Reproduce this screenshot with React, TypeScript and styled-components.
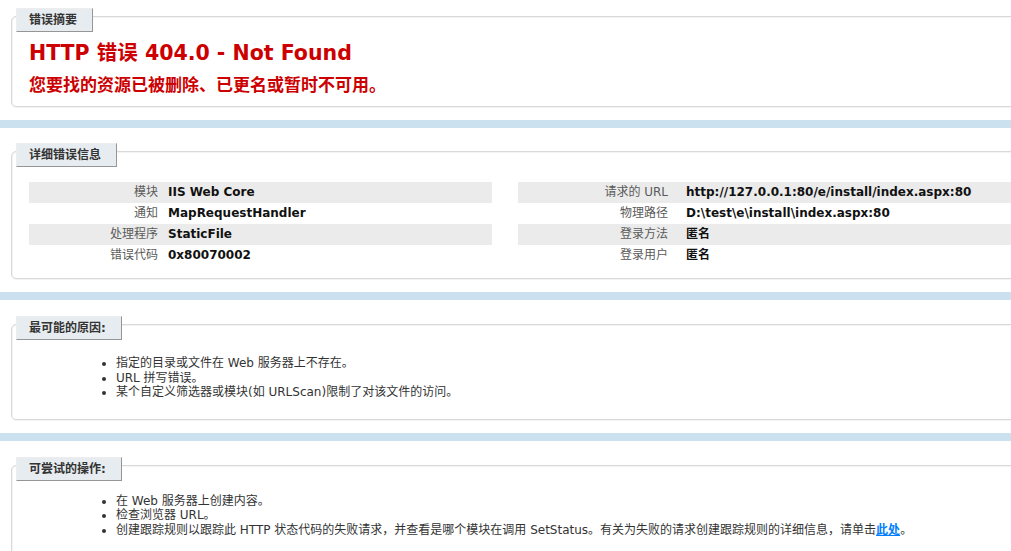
import React from "react";
import styled, { createGlobalStyle } from "styled-components";

const GlobalStyle = createGlobalStyle`
  html, body { margin: 0; padding: 0; }
  body {
    background: #cbe1ef;
    font-family: "DejaVu Sans", "Noto Sans CJK SC", sans-serif;
    font-size: 12px;
    color: #222;
    overflow: hidden;
  }
`;

const Page = styled.div`
  display: flex;
  flex-direction: column;
  gap: 8px;
  min-height: 551px;
`;

const Section = styled.section<{ $top: number; $grow?: boolean }>`
  background: #fff;
  display: flex;
  flex-direction: column;
  align-items: flex-start;
  padding: ${(p) => p.$top}px 0 13px 11px;
  flex-grow: ${(p) => (p.$grow ? 1 : 0)};
`;

const Tab = styled.div`
  position: relative;
  z-index: 1;
  margin: 0 0 -16px 5px;
  padding: 4px 15px 4px 12px;
  line-height: 14px;
  font-size: 12px;
  font-weight: bold;
  color: #333;
  background: #e7ecf0;
  border-top: 1px solid #ededed;
  border-left: 1px solid #ededed;
  border-right: 1px solid #969696;
  border-bottom: 1px solid #969696;
`;

const Box = styled.div<{ $pt: number; $pb: number }>`
  align-self: stretch;
  flex-grow: 1;
  margin-right: -60px;
  border: 1px solid #d9d9d9;
  box-shadow: inset 1px 1px 0 #f3f3f3, 0 1px 0 #f3f3f3;
  border-radius: 5px;
  padding: ${(p) => p.$pt + 1}px 0 ${(p) => p.$pb + 1}px 17px;
`;

const Title = styled.h2`
  margin: 0;
  font-size: 20.5px;
  line-height: 26px;
  color: #cc0000;
  font-weight: bold;
  white-space: nowrap;
`;

const Subtitle = styled.h3`
  margin: 7px 0 0;
  font-size: 17px;
  line-height: 24px;
  color: #cc0000;
  font-weight: bold;
  white-space: nowrap;
`;

const Details = styled.div`
  display: flex;
  gap: 26px;
`;

const InfoTable = styled.div<{ $width?: number }>`
  display: flex;
  flex-direction: column;
  ${(p) => (p.$width ? `width: ${p.$width}px; flex: none;` : `flex: 1;`)}
`;

const Row = styled.div<{ $alt: boolean; $label: number }>`
  display: grid;
  grid-template-columns: ${(p) => p.$label}px 1fr;
  background: ${(p) => (p.$alt ? "#ebebeb" : "transparent")};
  padding: 3px 0;
  line-height: 15px;
`;

const Label = styled.div<{ $pad: number }>`
  text-align: right;
  padding-right: ${(p) => p.$pad}px;
  color: #5a5a5a;
  white-space: nowrap;
`;

const Value = styled.div`
  font-weight: bold;
  color: #111;
  white-space: nowrap;
`;

const List = styled.ul`
  margin: 0;
  padding: 0 0 0 87px;
  list-style: disc;
  line-height: 14.5px;
  color: #333;
  white-space: nowrap;
`;

const Link = styled.a`
  color: #007eff;
  font-weight: bold;
  text-decoration: underline;
`;

type Item = [string, string];

const leftRows: Item[] = [
  ["模块", "IIS Web Core"],
  ["通知", "MapRequestHandler"],
  ["处理程序", "StaticFile"],
  ["错误代码", "0x80070002"],
];

const rightRows: Item[] = [
  ["请求的 URL", "http://127.0.0.1:80/e/install/index.aspx:80"],
  ["物理路径", "D:\\test\\e\\install\\index.aspx:80"],
  ["登录方法", "匿名"],
  ["登录用户", "匿名"],
];

function Table({ rows, label, pad, width }: { rows: Item[]; label: number; pad: number; width?: number }) {
  return (
    <InfoTable $width={width}>
      {rows.map(([k, v], i) => (
        <Row key={k} $alt={i % 2 === 0} $label={label}>
          <Label $pad={pad}>{k}</Label>
          <Value>{v}</Value>
        </Row>
      ))}
    </InfoTable>
  );
}

export default function App() {
  return (
    <>
      <GlobalStyle />
      <Page>
        <Section $top={8}>
          <Tab>错误摘要</Tab>
          <Box $pt={22} $pb={8}>
            <Title>HTTP 错误 404.0 - Not Found</Title>
            <Subtitle>您要找的资源已被删除、已更名或暂时不可用。</Subtitle>
          </Box>
        </Section>
        <Section $top={15}>
          <Tab>详细错误信息</Tab>
          <Box $pt={29} $pb={11}>
            <Details>
              <Table rows={leftRows} label={139} pad={10} width={463} />
              <Table rows={rightRows} label={168} pad={18} />
            </Details>
          </Box>
        </Section>
        <Section $top={16}>
          <Tab>最可能的原因:</Tab>
          <Box $pt={30} $pb={18}>
            <List>
              <li>指定的目录或文件在 Web 服务器上不存在。</li>
              <li>URL 拼写错误。</li>
              <li>某个自定义筛选器或模块(如 URLScan)限制了对该文件的访问。</li>
            </List>
          </Box>
        </Section>
        <Section $top={16} $grow>
          <Tab>可尝试的操作:</Tab>
          <Box $pt={27} $pb={20}>
            <List>
              <li>在 Web 服务器上创建内容。</li>
              <li>检查浏览器 URL。</li>
              <li>
                创建跟踪规则以跟踪此 HTTP 状态代码的失败请求，并查看是哪个模块在调用 SetStatus。有关为失败的请求创建跟踪规则的详细信息，请单击
                <Link href="#">此处</Link>。
              </li>
            </List>
          </Box>
        </Section>
      </Page>
    </>
  );
}
